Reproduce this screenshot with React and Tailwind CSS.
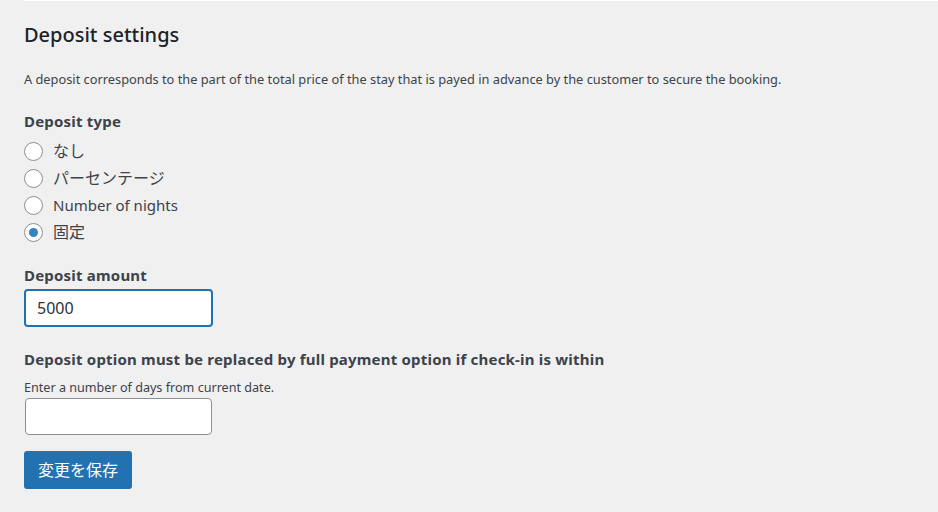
import React, { useState } from 'react';

const font = { fontFamily: '"Noto Sans", "Noto Sans CJK JP", sans-serif' };

const Radio = ({ label, cjk, checked, onChange }) => (
  <label className="flex items-center h-[27px] cursor-pointer">
    <span className="w-[19px] h-[19px] rounded-full border border-[#8c8f94] bg-white flex items-center justify-center shrink-0">
      {checked && <span className="w-[9px] h-[9px] rounded-full bg-[#3582c4]" />}
    </span>
    <input type="radio" className="hidden" checked={checked} onChange={onChange} />
    <span className={`ml-[10px] text-[#3c434a] ${cjk ? 'text-[16px]' : 'text-[15px]'}`}>{label}</span>
  </label>
);

const App = () => {
  const [type, setType] = useState('fixed');
  const [amount, setAmount] = useState('5000');
  const [days, setDays] = useState('');

  const options = [
    { key: 'none', label: 'なし', cjk: true },
    { key: 'percent', label: 'パーセンテージ', cjk: true },
    { key: 'nights', label: 'Number of nights' },
    { key: 'fixed', label: '固定', cjk: true },
  ];

  return (
    <div className="min-h-[512px] w-full bg-[#f0f0f1] text-[#1d2327]" style={font}>
      <div className="ml-[24px] h-px bg-white" />
      <div className="px-[24px]">
        <h2 className="text-[20px] font-medium leading-none pt-[24px] text-[#1d2327]">Deposit settings</h2>
        <p className="mt-[25px] text-[12.8px] text-[#3c434a]">
          A deposit corresponds to the part of the total price of the stay that is payed in advance by the customer to secure the booking.
        </p>

        <div className="mt-[21px] text-[15px] font-bold tracking-[0.2px] text-[#3c434a]">Deposit type</div>
        <div className="mt-[5px] flex flex-col">
          {options.map((o) => (
            <Radio key={o.key} label={o.label} cjk={o.cjk} checked={type === o.key} onChange={() => setType(o.key)} />
          ))}
        </div>

        <div className="mt-[18px] text-[15px] font-bold tracking-[0.2px] text-[#3c434a]">Deposit amount</div>
        <input
          value={amount}
          onChange={(e) => setAmount(e.target.value)}
          className="mt-[3px] block w-[189px] h-[38px] rounded-[4px] border-2 border-[#2271b1] bg-white px-[11px] text-[16px] text-[#2c3338] outline-none"
        />

        <div className="mt-[21px] text-[15px] font-bold tracking-[0.2px] text-[#3c434a]">
          Deposit option must be replaced by full payment option if check-in is within
        </div>
        <div className="mt-[8px] text-[12.6px] text-[#3c434a]">Enter a number of days from current date.</div>
        <input
          value={days}
          onChange={(e) => setDays(e.target.value)}
          className="mt-0 ml-px block w-[187px] h-[37px] rounded-[4px] border border-[#8c8f94] bg-white px-[8px] text-[16px] outline-none"
        />

        <button className="mt-[16px] h-[38px] px-[14px] rounded-[3px] bg-[#2271b1] text-white text-[16px]">
          変更を保存
        </button>
      </div>
    </div>
  );
};

export default App;
